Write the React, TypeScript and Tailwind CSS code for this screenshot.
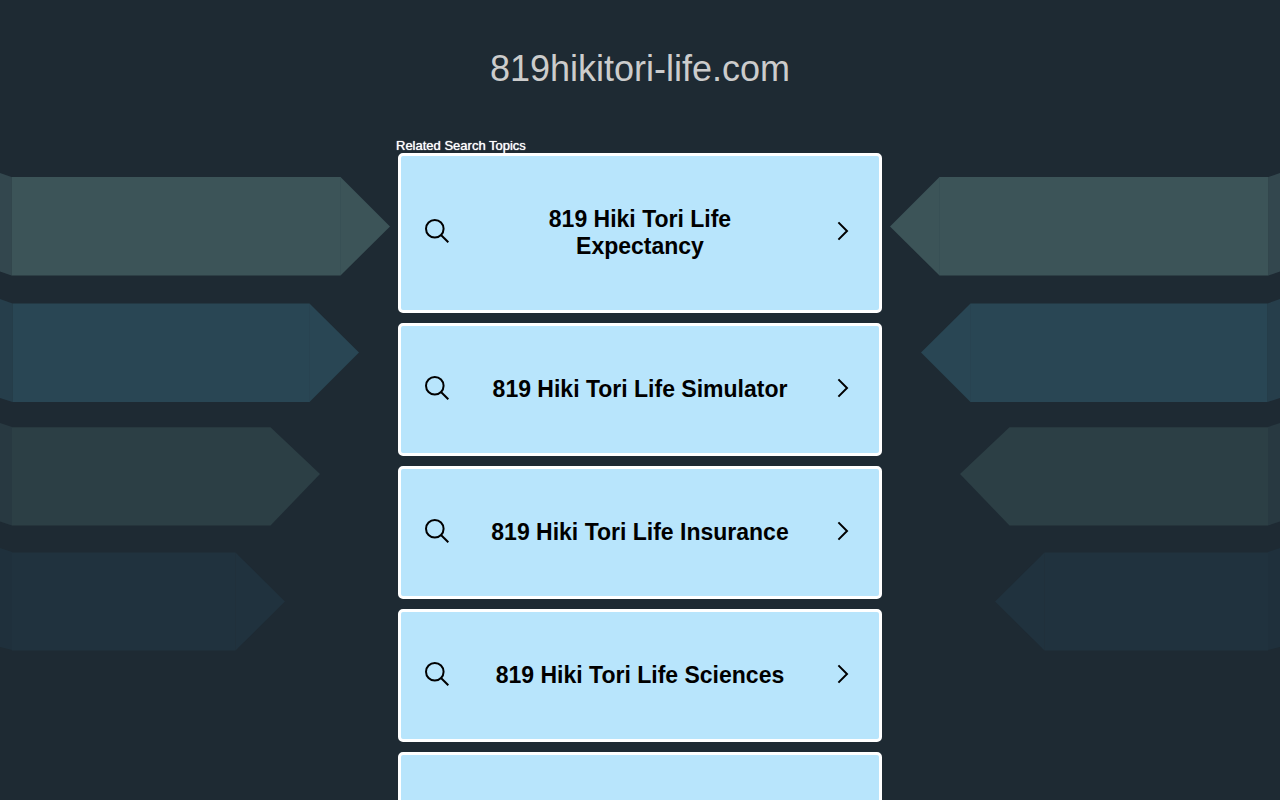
const topics = [
  '819 Hiki Tori Life Expectancy',
  '819 Hiki Tori Life Simulator',
  '819 Hiki Tori Life Insurance',
  '819 Hiki Tori Life Sciences',
];

function SearchIcon() {
  return (
    <svg className="-mt-1 size-6 shrink-0" viewBox="0 0 24 24" fill="none" stroke="currentColor" strokeWidth="2" aria-hidden="true">
      <circle cx="9.8" cy="9.8" r="8.8" />
      <path d="M16 16L23.3 23.3" />
    </svg>
  );
}

function ChevronIcon() {
  return (
    <svg className="-mt-1 h-5 w-3 shrink-0" viewBox="0 0 12 20" fill="none" stroke="currentColor" strokeWidth="2" aria-hidden="true">
      <path d="M1.4 1.4L10 10L1.4 18.6" />
    </svg>
  );
}

function TopicCard({ label }: { label: string }) {
  return (
    <a
      href="#"
      className="flex items-center rounded-[5px] border-3 border-white bg-[#b8e5fc] py-[50px] pr-[30px] pl-6 text-black"
    >
      <SearchIcon />
      <span className="min-h-[27px] flex-1 pr-10 pl-[34px] text-center text-[23px] leading-[27px] font-bold">{label}</span>
      <ChevronIcon />
    </a>
  );
}

function Ribbons({ className }: { className: string }) {
  return (
    <svg className={className} width="390" height="500" viewBox="0 0 390 500" aria-hidden="true">
      <path fill="#33474e" d="M0 13L11.500 17V115.500L0 111.500Z" />
      <path fill="#3c5458" d="M11.500 17H340.500L390 66.500L340.500 115.500H11.500Z" />
      <path stroke="#385055" d="M340.500 18V115" />
      <path fill="#263e4b" d="M0 139L12.500 143.500V242L0 238Z" />
      <path fill="#294654" d="M12.500 143.500H309.500L359 192.500L309.500 242H12.500Z" />
      <path stroke="#284351" d="M309.500 144V241" />
      <path fill="#283941" d="M0 263L12 267V365.500L0 361.500Z" />
      <path fill="#2c3f45" d="M12 267.300H270.500L320 314L270.500 365.500H12Z" />
      <path fill="#1f303c" d="M0 388L12 392V490L0 487Z" />
      <path fill="#20323e" d="M12 392.500H235.500L285 441.500L235.500 490.500H12Z" />
      <path stroke="#20303b" d="M235.500 393V490" />
    </svg>
  );
}

export default function App() {
  return (
    <div className="relative isolate h-screen overflow-hidden bg-[#1e2a33] font-['Liberation_Sans',Arial,sans-serif]">
      <Ribbons className="absolute top-40 left-0 -z-10" />
      <Ribbons className="absolute top-40 right-0 -z-10 -scale-x-100" />
      <header className="pt-12 text-center">
        <h1 className="text-[36px] leading-[42px] text-[#cccccc]">819hikitori-life.com</h1>
      </header>
      <main className="mx-auto mt-12 max-w-[488px]">
        <h2 className="text-[13px] leading-[15px] text-white [text-shadow:0_0_1px_#ffffff]">Related Search Topics</h2>
        <nav className="flex flex-col gap-2.5 px-0.5" aria-label="Related Search Topics">
          {topics.map((topic) => (
            <TopicCard key={topic} label={topic} />
          ))}
          <TopicCard label="" />
        </nav>
      </main>
    </div>
  );
}
